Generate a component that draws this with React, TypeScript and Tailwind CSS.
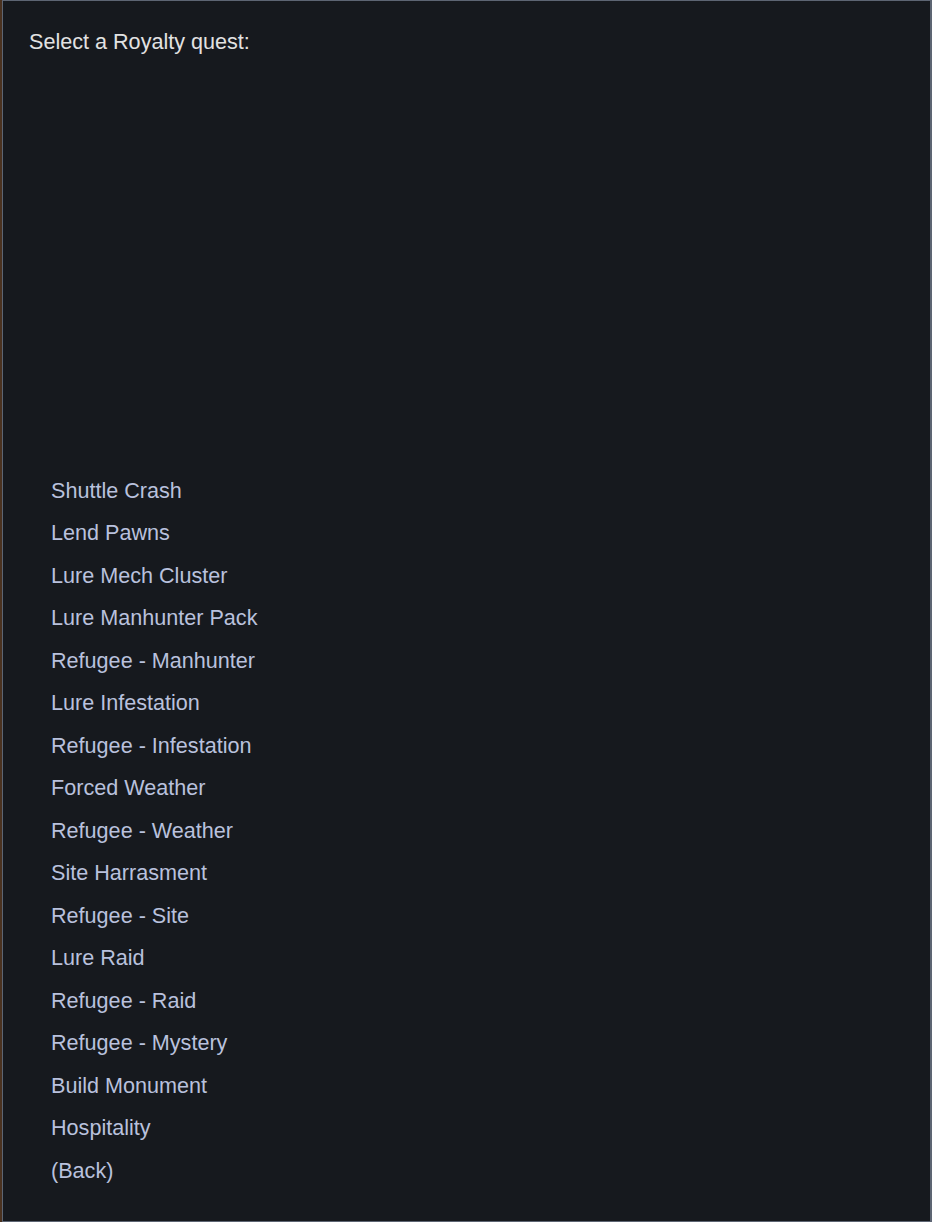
import React from "react";

const items = [
  "Shuttle Crash",
  "Lend Pawns",
  "Lure Mech Cluster",
  "Lure Manhunter Pack",
  "Refugee - Manhunter",
  "Lure Infestation",
  "Refugee - Infestation",
  "Forced Weather",
  "Refugee - Weather",
  "Site Harrasment",
  "Refugee - Site",
  "Lure Raid",
  "Refugee - Raid",
  "Refugee - Mystery",
  "Build Monument",
  "Hospitality",
  "(Back)",
];

export default function App() {
  return (
    <div
      className="w-[932px] h-[1222px] flex bg-[#4a3220]"
      style={{ fontFamily: '"Liberation Sans", Arial, sans-serif' }}
    >
      <div className="ml-[2px] flex-1 h-full border border-[#5d6573] border-r-2 bg-[#16191e] flex flex-col">
        <div className="pl-[26px] pt-[29px] text-[21.6px] leading-[24px] text-[#e2e2e2]">
          Select a Royalty quest:
        </div>
        <div className="flex-1" />
        <div className="pl-[48px] pb-[29px] flex flex-col">
          {items.map((t) => (
            <div key={t} className="h-[42.5px] flex items-center text-[21.6px] text-[#b9c1dd]">
              {t}
            </div>
          ))}
        </div>
      </div>
    </div>
  );
}
